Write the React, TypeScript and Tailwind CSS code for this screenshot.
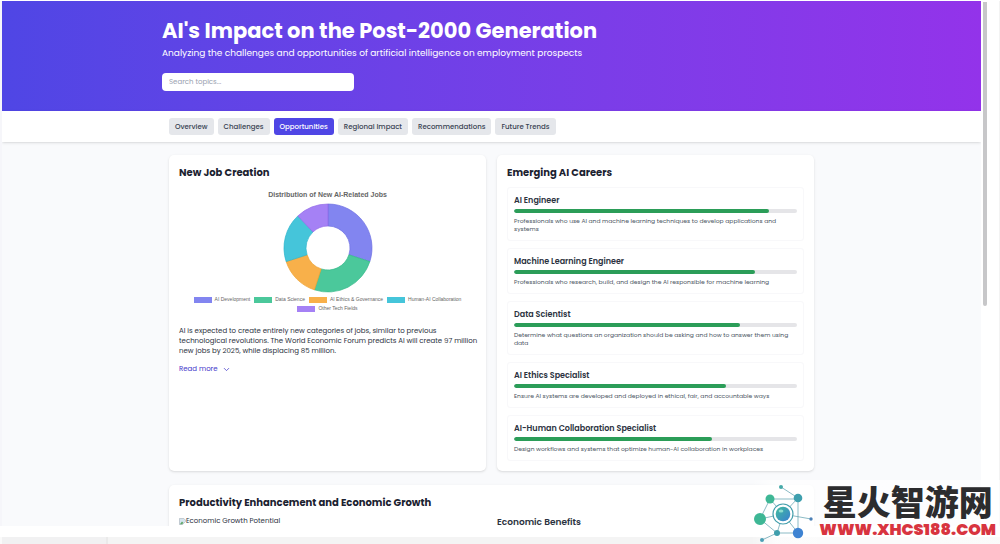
import React from 'react';
import { ChevronDown } from 'lucide-react';

const tabs = ['Overview', 'Challenges', 'Opportunities', 'Regional Impact', 'Recommendations', 'Future Trends'];

const slices = [
  { label: 'AI Development', share: 30, color: '#8285f0', line: '#6f70e2' },
  { label: 'Data Science', share: 25, color: '#4bc89b', line: '#35b98a' },
  { label: 'AI Ethics & Governance', share: 15, color: '#f8b04a', line: '#eda02f' },
  { label: 'Human-AI Collaboration', share: 18, color: '#45c5da', line: '#2cb4cb' },
  { label: 'Other Tech Fields', share: 12, color: '#a581f5', line: '#9069e8' },
];

const careers = [
  { title: 'AI Engineer', level: 90, text: 'Professionals who use AI and machine learning techniques to develop applications and systems' },
  { title: 'Machine Learning Engineer', level: 85, text: 'Professionals who research, build, and design the AI responsible for machine learning' },
  { title: 'Data Scientist', level: 80, text: 'Determine what questions an organization should be asking and how to answer them using data' },
  { title: 'AI Ethics Specialist', level: 75, text: 'Ensure AI systems are developed and deployed in ethical, fair, and accountable ways' },
  { title: 'AI-Human Collaboration Specialist', level: 70, text: 'Design workflows and systems that optimize human-AI collaboration in workplaces' },
];

function point(percent: number, radius: number) {
  const angle = (percent / 100) * Math.PI * 2;
  return `${45 + radius * Math.sin(angle)} ${45 - radius * Math.cos(angle)}`;
}

function Donut() {
  let start = 0;
  return (
    <svg viewBox="0 0 90 90" className="size-[90px]" role="img" aria-label="Distribution of New AI-Related Jobs">
      {slices.map((s) => {
        const from = start;
        const to = start + s.share;
        start = to;
        return (
          <path
            key={s.label}
            d={`M${point(from, 44)}A44 44 0 0 1 ${point(to, 44)}L${point(to, 22)}A22 22 0 0 0 ${point(from, 22)}Z`}
            fill={s.color}
            stroke={s.line}
            strokeWidth="0.7"
          />
        );
      })}
    </svg>
  );
}

function BrokenImage() {
  return (
    <svg viewBox="0 0 8 8" className="size-[7px] shrink-0" aria-hidden="true">
      <path d="M0.5 0.5H5.5L7.5 2.5V4L4 7.5H0.5Z" fill="#d5e4ee" stroke="#9aa5ae" strokeWidth="0.6" />
      <path d="M1 7L3.4 4L5 5.5L3.5 7Z" fill="#5fa868" />
    </svg>
  );
}

function SiteMark() {
  return (
    <div className="absolute right-0 bottom-0 flex h-[64px] items-center gap-1 bg-linear-to-r from-white/0 via-white/70 via-10% to-white/60 pr-1">
      <svg viewBox="0 0 64 64" className="size-[64px] shrink-0" aria-hidden="true">
        <defs>
          <linearGradient id="mark" x1="0" y1="0" x2="1" y2="1">
            <stop offset="0" stopColor="#41bd9d" />
            <stop offset="1" stopColor="#397fd0" />
          </linearGradient>
        </defs>
        <g stroke="#5a9dac" strokeWidth="0.7" fill="none">
          <path d="M19 19H47V53L26 53L9 39L19 19L32 34L47 18L30 7M26 53L11 60M26 53L32 34L60 39M9 39L32 34L47 53" />
        </g>
        <circle cx="30" cy="7" r="2" fill="#45a9a8" />
        <circle cx="19" cy="19" r="4.5" fill="#3eb795" />
        <circle cx="47" cy="18" r="4.3" fill="#3e9fae" />
        <circle cx="9" cy="39" r="6" fill="#3eb795" />
        <circle cx="26" cy="53" r="3" fill="#3f9eac" />
        <circle cx="47" cy="53" r="5.2" fill="#3e83d2" />
        <circle cx="11" cy="60" r="2" fill="#4c9fb5" />
        <circle cx="60" cy="39" r="1.7" fill="#4c80b6" />
        <circle cx="32" cy="34" r="10" fill="white" stroke="#449fac" strokeWidth="1.2" />
        <circle cx="32" cy="34" r="7.3" fill="url(#mark)" />
        <ellipse cx="30" cy="31" rx="2.4" ry="1.6" fill="#8bdccf" />
      </svg>
      <div className="flex flex-col items-center whitespace-nowrap">
        <div className="font-['Noto_Sans_CJK_SC',sans-serif] text-[34px] leading-[36px] font-black text-[#2c2c2e]">星火智游网</div>
        <div className="font-[Poppins,'DejaVu_Sans',sans-serif] text-[16px] leading-[22px] font-black text-[#d8343f]">WWW.XHCS188.COM</div>
      </div>
    </div>
  );
}

export default function App() {
  return (
    <div className="relative flex h-screen flex-col overflow-hidden bg-white pt-px font-[Poppins,Inter,sans-serif] text-[7px] leading-[10px] text-[#2b3240]">
      <div className="flex min-h-0 flex-1 border-l-2 border-[#f6f6fa]">
        <div className="flex min-w-0 flex-1 flex-col overflow-hidden bg-[#f9fafc]">
          <header className="shrink-0 bg-linear-to-r from-[#4f46e5] to-[#9333ea] pt-[18px] pb-5 text-white">
            <div className="mx-auto max-w-[659px]">
              <h1 className="text-[21px] leading-6 font-bold">AI's Impact on the Post-2000 Generation</h1>
              <p className="mt-[3px] text-[9px] leading-[14px]">Analyzing the challenges and opportunities of artificial intelligence on employment prospects</p>
              <input
                type="search"
                aria-label="Search topics"
                placeholder="Search topics..."
                className="mt-[13px] block h-[18px] w-48 rounded-[4px] bg-white px-[7px] text-[7px] text-gray-800 outline-none placeholder:text-gray-400"
              />
            </div>
          </header>
          <nav className="relative shrink-0 bg-white py-[7px] shadow-sm">
            <div className="mx-auto flex max-w-[645px] gap-1">
              {tabs.map((tab) => (
                <button
                  key={tab}
                  type="button"
                  className={
                    tab === 'Opportunities'
                      ? 'h-[17px] rounded-[3px] bg-[#4f46e5] px-[6px] font-medium text-white'
                      : 'h-[17px] rounded-[3px] bg-[#e5e7eb] px-[6px] font-medium text-[#374151]'
                  }
                >
                  {tab}
                </button>
              ))}
            </div>
          </nav>
          <main className="mx-auto w-full max-w-[645px] shrink-0 pt-[13px]">
            <div className="grid grid-cols-2 gap-[11px]">
              <section className="rounded-[5px] bg-white p-[10px] shadow-sm">
                <h2 className="text-[10px] leading-4 font-bold text-[#1b2230]">New Job Creation</h2>
                <figure className="mt-[9px] flex flex-col items-center font-['Liberation_Sans',sans-serif] text-[#666]">
                  <figcaption className="text-[7px] leading-[10px] font-bold">Distribution of New AI-Related Jobs</figcaption>
                  <div className="mt-[3px]">
                    <Donut />
                  </div>
                  <ul className="mt-[2px] flex flex-wrap justify-center gap-x-1 px-3 text-[5px] leading-[9px]">
                    {slices.map((s) => (
                      <li key={s.label} className="flex items-center gap-[3px]">
                        <span className="h-[6px] w-[18px]" style={{ backgroundColor: s.color }} />
                        {s.label}
                      </li>
                    ))}
                  </ul>
                </figure>
                <p className="mt-[13px] -mr-1">
                  AI is expected to create entirely new categories of jobs, similar to previous technological revolutions. The World Economic Forum predicts AI will create 97 million new jobs by 2025, while displacing 85 million.
                </p>
                <button type="button" className="mt-2 flex items-center gap-1 text-[#4338ca]">
                  Read more
                  <ChevronDown className="size-[9px]" strokeWidth={2} />
                </button>
              </section>
              <section className="rounded-[5px] bg-white p-[10px] shadow-sm">
                <h2 className="text-[10px] leading-4 font-bold text-[#1b2230]">Emerging AI Careers</h2>
                <ul className="mt-[6px] flex flex-col gap-[7px]">
                  {careers.map((c) => (
                    <li key={c.title} className="rounded-[3px] border border-[#f8f8fa] px-[6px] py-[7px]">
                      <h3 className="text-[8px] leading-[11px] font-semibold">{c.title}</h3>
                      <div className="mt-[3px] h-1 overflow-hidden rounded-full bg-[#e5e5e8]">
                        <div className="h-full rounded-full bg-[#2b9d58]" style={{ width: `${c.level}%` }} />
                      </div>
                      <p className="mt-1 text-[6px] leading-2 text-[#4b5563]">{c.text}</p>
                    </li>
                  ))}
                </ul>
              </section>
            </div>
            <section className="mt-[14px] rounded-[5px] bg-white p-[10px] pb-10 shadow-sm">
              <h2 className="text-[10px] leading-4 font-bold text-[#1b2230]">Productivity Enhancement and Economic Growth</h2>
              <div className="mt-[6px] grid grid-cols-2 gap-[11px]">
                <div className="flex h-2 items-center">
                  <BrokenImage />
                  <span>Economic Growth Potential</span>
                </div>
                <h3 className="text-[9px] leading-[10px] font-semibold">Economic Benefits</h3>
              </div>
            </section>
          </main>
        </div>
        <div className="w-[19px] shrink-0 border-r border-[#f3f3f3] bg-white pt-px pl-[2px]">
          <div className="h-[58%] w-1 rounded-b-sm bg-[#c7c7c9]" />
        </div>
      </div>
      <div className="h-[11px] shrink-0 bg-white" />
      <div className="flex h-[7px] shrink-0 border-l-2 border-[#fafafa] bg-[#f4f4f4]">
        <div className="w-[106px] border-r-2 border-[#eaeaea] bg-[#f1f1f2]" />
      </div>
      <SiteMark />
    </div>
  );
}
